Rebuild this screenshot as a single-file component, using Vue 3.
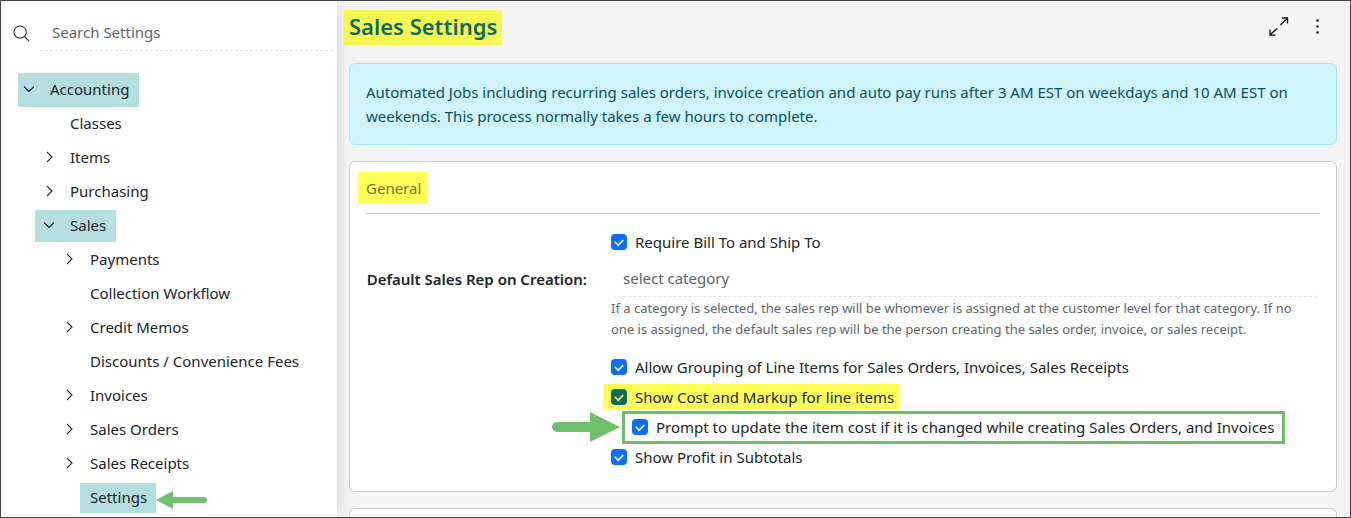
<script setup>
import { ref } from 'vue'

const tree = [
  { label: 'Accounting', level: 0, state: 'open', mark: 'root' },
  { label: 'Classes', level: 1 },
  { label: 'Items', level: 1, state: 'closed' },
  { label: 'Purchasing', level: 1, state: 'closed' },
  { label: 'Sales', level: 1, state: 'open', mark: 'branch' },
  { label: 'Payments', level: 2, state: 'closed' },
  { label: 'Collection Workflow', level: 2 },
  { label: 'Credit Memos', level: 2, state: 'closed' },
  { label: 'Discounts / Convenience Fees', level: 2 },
  { label: 'Invoices', level: 2, state: 'closed' },
  { label: 'Sales Orders', level: 2, state: 'closed' },
  { label: 'Sales Receipts', level: 2, state: 'closed' },
  { label: 'Settings', level: 2, mark: 'leaf' },
]

const billTo = ref(true)
const options = ref([
  { id: 'grouping', label: 'Allow Grouping of Line Items for Sales Orders, Invoices, Sales Receipts', on: true },
  { id: 'markup', label: 'Show Cost and Markup for line items', on: true, look: 'marked' },
  { id: 'prompt', label: 'Prompt to update the item cost if it is changed while creating Sales Orders, and Invoices', on: true, look: 'boxed' },
  { id: 'profit', label: 'Show Profit in Subtotals', on: true },
])
</script>

<template>
  <div class="frame">
    <aside class="sidebar">
      <div class="search">
        <svg class="search-icon" viewBox="0 0 18 18" aria-hidden="true">
          <circle cx="7.5" cy="7.5" r="6.5" />
          <path d="M12 12l5 5" />
        </svg>
        <input type="text" placeholder="Search Settings" aria-label="Search Settings" />
      </div>
      <nav>
        <ul class="tree">
          <li v-for="item in tree" :key="item.label" :class="'level-' + item.level">
            <div class="node" :class="item.mark && 'mark-' + item.mark">
              <button v-if="item.state" class="toggle" type="button" :aria-label="'Toggle ' + item.label">
                <svg v-if="item.state === 'open'" viewBox="0 0 12 12" aria-hidden="true"><path d="M1 3.5l5 5 5-5" /></svg>
                <svg v-else viewBox="0 0 12 12" aria-hidden="true"><path d="M4 1l5 5-5 5" /></svg>
              </button>
              <a href="#">{{ item.label }}</a>
              <svg v-if="item.mark === 'leaf'" class="arrow-left" viewBox="0 0 52 18" aria-hidden="true">
                <path d="M0 9L17 0V6H48a3 3 0 0 1 0 6H17V18Z" />
              </svg>
            </div>
          </li>
        </ul>
      </nav>
    </aside>

    <main class="main">
      <header class="header">
        <h1>Sales Settings</h1>
        <div class="actions">
          <button type="button" aria-label="Expand">
            <svg viewBox="0 0 20 20" aria-hidden="true"><path d="M11.5 8L18.5 1M13 1h5.5V6.5M8 11.5L1 18M6.5 18.2H1V12.5" /></svg>
          </button>
          <button type="button" aria-label="More options">
            <svg class="dots" viewBox="0 0 20 20" aria-hidden="true">
              <circle cx="9.5" cy="3.5" r="1.3" /><circle cx="9.5" cy="9.5" r="1.3" /><circle cx="9.5" cy="15.5" r="1.3" />
            </svg>
          </button>
        </div>
      </header>

      <div class="alert" role="status">
        Automated Jobs including recurring sales orders, invoice creation and auto pay runs after 3 AM EST on weekdays and 10 AM EST on weekends. This process normally takes a few hours to complete.
      </div>

      <section class="card">
        <h2><span>General</span></h2>
        <div class="form">
          <div class="field line">
            <label class="check"><input v-model="billTo" type="checkbox" />Require Bill To and Ship To</label>
          </div>
          <label class="caption" for="rep">Default Sales Rep on Creation:</label>
          <div class="field">
            <select id="rep"><option>select category</option></select>
            <p class="help">
              If a category is selected, the sales rep will be whomever is assigned at the customer level for that category. If no one is assigned, the default sales rep will be the person creating the sales order, invoice, or sales receipt.
            </p>
          </div>
          <div v-for="option in options" :key="option.id" class="field line">
            <svg v-if="option.look === 'boxed'" class="arrow-right" viewBox="0 0 68 30" aria-hidden="true">
              <path d="M68 15L38 0V10H5a5 5 0 0 0 0 10H38V30Z" />
            </svg>
            <label class="check" :class="option.look"><input v-model="option.on" type="checkbox" />{{ option.label }}</label>
          </div>
        </div>
      </section>

      <section class="card next" aria-label="More settings"></section>
    </main>
  </div>
</template>

<style>
body {
  background: #f5f5f5;
}
</style>

<style scoped>
* {
  box-sizing: border-box;
}
.frame {
  display: flex;
  height: 100vh;
  overflow: hidden;
  border: 1px solid #444345;
  background: #f5f5f5;
  color: #212529;
  font: 15px/24px "Segoe UI", "Noto Sans", "Open Sans", sans-serif;
}
.sidebar {
  flex: 0 0 336px;
  background: #fff;
  box-shadow: 0 0 16px rgba(0, 0, 0, 0.15);
}
.search {
  display: flex;
  align-items: center;
  gap: 10px;
  padding: 14px 4px 0 12px;
}
.search-icon {
  flex: none;
  width: 17px;
  height: 17px;
  fill: none;
  stroke: #212529;
  stroke-width: 1.1;
}
.search input {
  flex: 1;
  min-width: 0;
  height: 36px;
  padding: 0 12px 2px;
  border: 0;
  border-bottom: 1px dashed #dee2e6;
  background: none;
  color: #212529;
  font: inherit;
}
.search input::placeholder {
  color: #60656a;
  opacity: 1;
}
.tree {
  margin: 22px 0 0;
  padding: 0 0 0 17px;
  list-style: none;
}
.tree li {
  display: flex;
  align-items: center;
  height: 34px;
}
.level-1 {
  padding-left: 20px;
}
.level-2 {
  padding-left: 40px;
}
.node {
  position: relative;
  display: flex;
  align-items: center;
  height: 32px;
}
.node a {
  margin-left: 10px;
  padding-bottom: 2px;
  color: inherit;
  text-decoration: none;
}
.node a:first-child {
  margin-left: 32px;
}
.toggle {
  display: flex;
  align-items: center;
  justify-content: center;
  width: 22px;
  height: 22px;
  padding: 0 0 2px;
  border: 0;
  background: none;
}
.toggle svg {
  width: 12px;
  height: 12px;
  fill: none;
  stroke: #212529;
  stroke-width: 1.1;
}
.mark-root,
.mark-branch,
.mark-leaf {
  background: #b3e0df;
}
.mark-root {
  height: 34px;
  padding-right: 10px;
}
.mark-branch {
  margin-left: -3px;
  padding: 0 10px 0 3px;
}
.mark-leaf {
  height: 30px;
  margin-left: 22px;
  padding-right: 9px;
}
.mark-leaf a:first-child {
  margin-left: 10px;
}
.arrow-left {
  position: absolute;
  top: 8px;
  left: 100%;
  width: 52px;
  height: 18px;
  fill: #70bf6b;
}
.main {
  flex: 1;
  min-width: 0;
  padding: 9px 13px 0 12px;
}
.header {
  display: flex;
  justify-content: space-between;
  height: 53px;
}
h1 {
  height: 35px;
  margin: 0 0 0 -5px;
  padding: 0 5px;
  background: #f7f752;
  color: #106b5d;
  font-size: 22px;
  font-weight: 600;
  line-height: 32px;
}
.actions {
  display: flex;
  gap: 19px;
  padding: 7px 9px 0 0;
}
.actions button {
  width: 20px;
  height: 20px;
  padding: 0;
  border: 0;
  background: none;
}
.actions svg {
  display: block;
  width: 20px;
  height: 20px;
  fill: none;
  stroke: #111;
  stroke-width: 1.3;
}
.actions .dots {
  fill: #111;
  stroke: none;
}
.alert {
  margin-bottom: 16px;
  padding: 16px;
  border: 1px solid #9eeaf9;
  border-radius: 6px;
  background: #cff4fc;
  color: #055160;
}
.card {
  margin-bottom: 16px;
  padding: 10px 16px 19px;
  border: 1px solid #ccc;
  border-radius: 6px;
  background: #fff;
}
.next {
  height: 100px;
}
h2 {
  display: flex;
  margin: 0 0 13px;
  padding-bottom: 9px;
  border-bottom: 1px solid #c4c4c4;
  font-size: 15px;
  font-weight: 400;
}
h2 span {
  margin-left: -8px;
  padding: 0 7px 0 8px;
  background: #ffff57;
  color: #72752b;
  line-height: 32px;
}
.form {
  display: grid;
  grid-template-columns: 221px 1fr;
  column-gap: 24px;
}
.caption {
  padding-top: 10px;
  font-weight: 600;
  text-align: right;
  white-space: nowrap;
}
.field {
  grid-column: 2;
  min-width: 0;
}
.line {
  position: relative;
  display: flex;
  align-items: center;
  height: 30px;
}
.check {
  display: flex;
  align-items: center;
  gap: 8px;
  height: 26px;
  white-space: nowrap;
}
.check input {
  flex: none;
  display: grid;
  place-items: center;
  width: 16px;
  height: 16px;
  margin: 0;
  border-radius: 4px;
  background: #0d6efd;
  appearance: none;
}
.check input:checked::before {
  content: "";
  width: 8px;
  height: 5px;
  margin-top: -2px;
  border: solid #fff;
  border-width: 0 0 2px 2px;
  rotate: -45deg;
  scale: 0.8;
}
.marked {
  margin-left: -8px;
  padding: 0 5px 0 8px;
  background: #ffff57;
}
.check.marked input {
  background: #0d6b5c;
}
.check.marked input:checked::before {
  border-color: #ffff57;
}
.boxed {
  height: 27px;
  margin-left: 14px;
  padding: 0 8px 0 7px;
  outline: 3px solid #70bf6b;
}
.arrow-right {
  position: absolute;
  right: 100%;
  width: 68px;
  height: 30px;
  margin-right: -9px;
  fill: #70bf6b;
}
select {
  display: block;
  width: 100%;
  height: 40px;
  padding: 2px 12px 0;
  border: 0;
  border-bottom: 1px dashed #dee2e6;
  border-radius: 6px;
  background: none;
  color: #60656a;
  font: inherit;
  appearance: none;
}
.help {
  margin: 1px 0 12px;
  padding-right: 12px;
  color: #61666b;
  font-size: 13px;
  line-height: 21px;
}
</style>
